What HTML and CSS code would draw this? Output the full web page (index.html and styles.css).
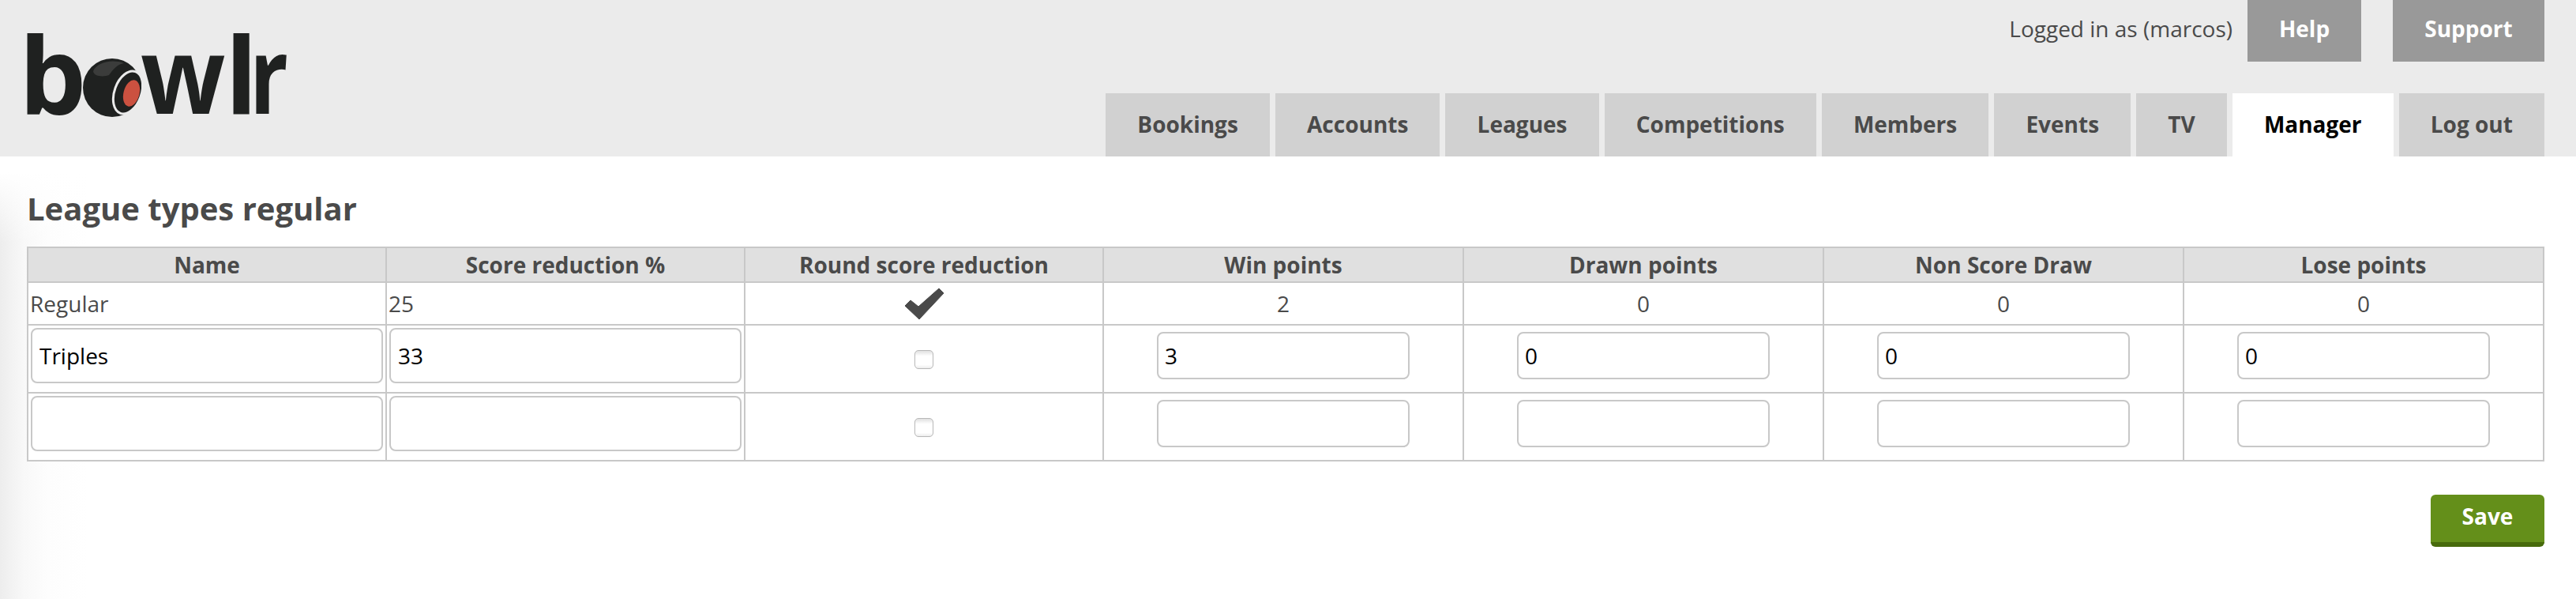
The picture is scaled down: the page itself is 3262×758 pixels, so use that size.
FILE: index.html
```html
<!DOCTYPE html>
<html lang="en">
<head>
    <meta charset="UTF-8">
    <title>League types regular</title>
    <link rel="stylesheet" href="styles.css">
</head>
<body>
    <div class="header">
        <div class="logo" aria-label="bowlr">
            <span class="logo-b">b</span>
            <svg class="ball" viewBox="0 0 74 74" width="74" height="74" aria-hidden="true">
                <circle cx="37" cy="37" r="37" fill="#1f2120"/>
                <path d="M13 16C17 6 35 0 52 6C44 7 38 14 33 21C28 23 14 24 13 16Z" fill="#3b3c3b"/>
                <ellipse cx="57" cy="43" rx="17" ry="28" transform="rotate(20 57 43)" fill="#1f2120" stroke="#ebebeb" stroke-width="3"/>
                <ellipse cx="61.5" cy="44" rx="10" ry="17" transform="rotate(15 61.5 44)" fill="#cb5140"/>
            </svg>
            <span class="logo-w">w</span>
            <span class="logo-l">l</span>
            <span class="logo-r">r</span>
        </div>
        <div class="header-right">
            <div class="top-links">
                <span class="user">Logged in as (marcos)</span>
                <a class="top-btn help" href="#">Help</a>
                <a class="top-btn support" href="#">Support</a>
            </div>
            <div class="nav">
                <a class="tab" href="#">Bookings</a>
                <a class="tab" href="#">Accounts</a>
                <a class="tab" href="#">Leagues</a>
                <a class="tab" href="#">Competitions</a>
                <a class="tab" href="#">Members</a>
                <a class="tab" href="#">Events</a>
                <a class="tab" href="#">TV</a>
                <a class="tab active" href="#">Manager</a>
                <a class="tab" href="#">Log out</a>
            </div>
        </div>
    </div>

    <div class="content">
        <h1>League types regular</h1>

        <table class="types">
            <colgroup>
                <col class="col-s">
                <col class="col-s">
                <col class="col-s">
                <col class="col-l">
                <col class="col-l">
                <col class="col-l">
                <col class="col-l">
            </colgroup>
            <tr>
                <th>Name</th>
                <th>Score reduction %</th>
                <th>Round score reduction</th>
                <th>Win points</th>
                <th>Drawn points</th>
                <th>Non Score Draw</th>
                <th>Lose points</th>
            </tr>
            <tr class="read-row">
                <td>Regular</td>
                <td>25</td>
                <td class="mid">
                    <svg class="tick" viewBox="0 0 51 41" width="51" height="41" aria-hidden="true">
                        <path d="M1 23L8 16L18 24L44 1L50 7L19 40Z" fill="#4a4a4a" stroke="#4a4a4a" stroke-linejoin="round"/>
                    </svg>
                </td>
                <td class="mid">2</td>
                <td class="mid">0</td>
                <td class="mid">0</td>
                <td class="mid">0</td>
            </tr>
            <tr class="edit-row">
                <td><input class="wide" type="text" value="Triples"></td>
                <td><input class="wide" type="text" value="33"></td>
                <td class="mid"><input class="check" type="checkbox"></td>
                <td class="mid"><input class="num" type="text" value="3"></td>
                <td class="mid"><input class="num" type="text" value="0"></td>
                <td class="mid"><input class="num" type="text" value="0"></td>
                <td class="mid"><input class="num" type="text" value="0"></td>
            </tr>
            <tr class="edit-row">
                <td><input class="wide" type="text"></td>
                <td><input class="wide" type="text"></td>
                <td class="mid"><input class="check" type="checkbox"></td>
                <td class="mid"><input class="num" type="text"></td>
                <td class="mid"><input class="num" type="text"></td>
                <td class="mid"><input class="num" type="text"></td>
                <td class="mid"><input class="num" type="text"></td>
            </tr>
        </table>

        <div class="actions">
            <button class="save">Save</button>
        </div>
    </div>
</body>
</html>
```

FILE: styles.css
```css
html, body {
    height: 100%;
}

body {
    margin: 0;
    font-family: "Open Sans", "Noto Sans", sans-serif;
    font-size: 28px;
    color: #4a4a4a;
    background-color: #fff;
    overflow: hidden;
}

a {
    text-decoration: none;
}

.header {
    display: flex;
    justify-content: space-between;
    height: 198px;
    padding: 0 40px 0 34px;
    background-color: #ebebeb;
}

.logo {
    display: flex;
    align-items: flex-start;
    height: 198px;
    font-size: 135px;
    font-weight: 700;
    line-height: 184px;
    color: #1f2120;
}

/* letters of the logo sit tighter than the font does */
.logo-b {
    margin-left: -10px;
}

.ball {
    margin: 74px 0 0 -4px;
}

.logo-w {
    margin-left: -1px;
    letter-spacing: -9px;
    transform: scaleX(0.93);
    transform-origin: left;
}

.logo-l {
    letter-spacing: -10px;
}

.logo-r {
    transform: scaleX(0.8);
    transform-origin: left;
}

.header-right {
    display: flex;
    flex-direction: column;
    align-items: flex-end;
    justify-content: space-between;
}

.top-links {
    display: flex;
    align-items: flex-start;
}

.user {
    margin-right: 19px;
    line-height: 72px;
}

.top-btn {
    height: 78px;
    line-height: 72px;
    text-align: center;
    font-weight: 700;
    color: #fff;
    background-color: #999;
}

.help {
    width: 144px;
    margin-right: 40px;
}

.support {
    width: 192px;
}

.nav {
    display: flex;
    gap: 7px;
}

.tab {
    height: 80px;
    padding: 0 40.1px;
    line-height: 78px;
    font-weight: 700;
    color: #4a4a4a;
    background-color: #d1d1d1;
}

.tab.active {
    color: #000;
    background-color: #fff;
}

.content {
    height: 560px;
    padding: 0 40px 0 34px;
    background:
        linear-gradient(180deg, #fff 20px, rgba(255, 255, 255, 0) 110px),
        linear-gradient(90deg, #ededed, #f8f8f8 30px, #fdfdfd 60px, #fff 110px);
}

h1 {
    margin: 0;
    padding: 46px 0 28px 0;
    font-size: 40px;
    line-height: 40px;
    font-weight: 700;
    color: #4a4a4a;
}

.types {
    width: 3188px;
    table-layout: fixed;
    border-collapse: collapse;
    border: 2px solid #c8c8c8;
    background-color: #fff;
}

.col-s {
    width: 454px;
}

.col-l {
    width: 456px;
}

.types th,
.types td {
    border: 2px solid #c8c8c8;
    padding: 0;
}

.types th {
    height: 42px;
    font-weight: 700;
    background-color: #e0e0e0;
}

.read-row td {
    height: 52px;
    padding-left: 2px;
}

.edit-row td {
    height: 84px;
    vertical-align: top;
}

.types td.mid {
    padding-left: 0;
    text-align: center;
    vertical-align: middle;
}

.tick {
    display: block;
    margin: 0 auto;
}

input {
    font-family: inherit;
    font-size: 28px;
    color: #000;
    box-sizing: border-box;
    background-color: #fff;
    border: 2px solid #c8c8c8;
    border-radius: 8px;
    outline: none;
}

.wide {
    display: block;
    width: 446px;
    height: 70px;
    margin: 3px auto 0;
    padding: 0 9px;
}

.num {
    display: block;
    width: 320px;
    height: 60px;
    margin: 0 auto 8px;
    padding: 0 8px;
}

.check {
    display: block;
    appearance: none;
    width: 24px;
    height: 24px;
    margin: 2px auto 0;
    border: 1px solid #b8b8b8;
    border-radius: 5px;
    background: linear-gradient(180deg, #e0e0e0, #fff 30%, #fff 80%, #ececec);
}

.actions {
    display: flex;
    justify-content: flex-end;
    margin-top: 42px;
}

.save {
    box-sizing: border-box;
    width: 144px;
    height: 66px;
    padding: 0 0 6px;
    font-family: inherit;
    font-size: 28px;
    font-weight: 700;
    color: #fff;
    background-color: #648f1a;
    border: none;
    border-bottom: 6px solid #476a0c;
    border-radius: 6px;
}
```
